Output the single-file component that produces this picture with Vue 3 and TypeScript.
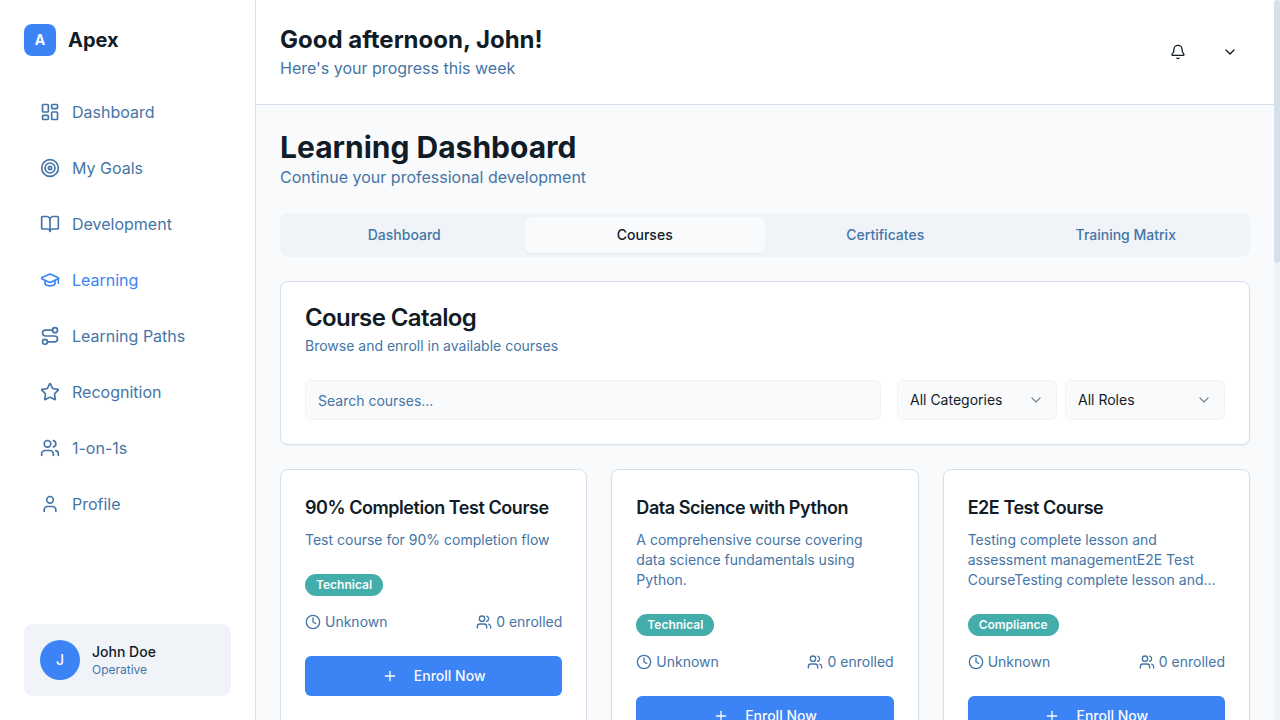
<script setup lang="ts">
interface NavItem {
  label: string
  icon: string
  active?: boolean
}

interface Course {
  title: string
  description: string
  category: string
  enrolled: number
}

const icons: Record<string, string[]> = {
  dashboard: [
    'M4 3h5a1 1 0 0 1 1 1v7a1 1 0 0 1-1 1H4a1 1 0 0 1-1-1V4a1 1 0 0 1 1-1z',
    'M15 3h5a1 1 0 0 1 1 1v3a1 1 0 0 1-1 1h-5a1 1 0 0 1-1-1V4a1 1 0 0 1 1-1z',
    'M15 12h5a1 1 0 0 1 1 1v7a1 1 0 0 1-1 1h-5a1 1 0 0 1-1-1v-7a1 1 0 0 1 1-1z',
    'M4 16h5a1 1 0 0 1 1 1v3a1 1 0 0 1-1 1H4a1 1 0 0 1-1-1v-3a1 1 0 0 1 1-1z',
  ],
  target: [
    'M22 12a10 10 0 1 1-20 0 10 10 0 0 1 20 0z',
    'M18 12a6 6 0 1 1-12 0 6 6 0 0 1 12 0z',
    'M14 12a2 2 0 1 1-4 0 2 2 0 0 1 4 0z',
  ],
  book: [
    'M12 7v14',
    'M3 18a1 1 0 0 1-1-1V4a1 1 0 0 1 1-1h5a4 4 0 0 1 4 4 4 4 0 0 1 4-4h5a1 1 0 0 1 1 1v13a1 1 0 0 1-1 1h-6a3 3 0 0 0-3 3 3 3 0 0 0-3-3z',
  ],
  cap: [
    'M21.42 10.922a1 1 0 0 0-.019-1.838L12.83 5.18a2 2 0 0 0-1.66 0L2.6 9.08a1 1 0 0 0 0 1.832l8.57 3.908a2 2 0 0 0 1.66 0z',
    'M22 10v6',
    'M6 12.5V16a6 3 0 0 0 12 0v-3.5',
  ],
  route: [
    'M9 19a3 3 0 1 1-6 0 3 3 0 0 1 6 0z',
    'M9 19h8.5a3.5 3.5 0 0 0 0-7h-11a3.5 3.5 0 0 1 0-7H15',
    'M21 5a3 3 0 1 1-6 0 3 3 0 0 1 6 0z',
  ],
  star: [
    'M11.525 2.295a.53.53 0 0 1 .95 0l2.31 4.679a2.123 2.123 0 0 0 1.595 1.16l5.166.756a.53.53 0 0 1 .294.904l-3.736 3.638a2.123 2.123 0 0 0-.611 1.878l.882 5.14a.53.53 0 0 1-.771.56l-4.618-2.428a2.122 2.122 0 0 0-1.973 0L6.396 21.01a.53.53 0 0 1-.77-.56l.881-5.139a2.122 2.122 0 0 0-.611-1.879L2.16 9.795a.53.53 0 0 1 .294-.906l5.165-.755a2.122 2.122 0 0 0 1.597-1.16z',
  ],
  users: [
    'M16 21v-2a4 4 0 0 0-4-4H6a4 4 0 0 0-4 4v2',
    'M13 7a4 4 0 1 1-8 0 4 4 0 0 1 8 0z',
    'M22 21v-2a4 4 0 0 0-3-3.87',
    'M16 3.13a4 4 0 0 1 0 7.75',
  ],
  user: ['M19 21v-2a4 4 0 0 0-4-4H9a4 4 0 0 0-4 4v2', 'M16 7a4 4 0 1 1-8 0 4 4 0 0 1 8 0z'],
  bell: [
    'M10.268 21a2 2 0 0 0 3.464 0',
    'M3.262 15.326A1 1 0 0 0 4 17h16a1 1 0 0 0 .74-1.673C19.41 13.956 18 12.499 18 8A6 6 0 0 0 6 8c0 4.499-1.411 5.956-2.738 7.326',
  ],
  chevron: ['M6 9l6 6 6-6'],
  clock: ['M22 12a10 10 0 1 1-20 0 10 10 0 0 1 20 0z', 'M12 6v6l4 2'],
  plus: ['M5 12h14', 'M12 5v14'],
}

const nav: NavItem[] = [
  { label: 'Dashboard', icon: 'dashboard' },
  { label: 'My Goals', icon: 'target' },
  { label: 'Development', icon: 'book' },
  { label: 'Learning', icon: 'cap', active: true },
  { label: 'Learning Paths', icon: 'route' },
  { label: 'Recognition', icon: 'star' },
  { label: '1-on-1s', icon: 'users' },
  { label: 'Profile', icon: 'user' },
]

const tabs: string[] = ['Dashboard', 'Courses', 'Certificates', 'Training Matrix']
const activeTab = 'Courses'
const filters: string[] = ['All Categories', 'All Roles']

const courses: Course[] = [
  {
    title: '90% Completion Test Course',
    description: 'Test course for 90% completion flow',
    category: 'Technical',
    enrolled: 0,
  },
  {
    title: 'Data Science with Python',
    description: 'A comprehensive course covering data science fundamentals using Python.',
    category: 'Technical',
    enrolled: 0,
  },
  {
    title: 'E2E Test Course',
    description:
      'Testing complete lesson and assessment managementE2E Test CourseTesting complete lesson and...',
    category: 'Compliance',
    enrolled: 0,
  },
]
</script>

<template>
  <div class="app">
    <aside class="sidebar">
      <div class="brand">
        <div class="brand-mark">A</div>
        <span class="brand-name">Apex</span>
      </div>
      <nav class="nav">
        <a v-for="item in nav" :key="item.label" class="nav-item" :class="{ active: item.active }">
          <svg class="icon large" viewBox="0 0 24 24">
            <path v-for="d in icons[item.icon]" :key="d" :d="d" />
          </svg>
          <span>{{ item.label }}</span>
        </a>
      </nav>
      <div class="account">
        <div class="avatar">J</div>
        <div>
          <div class="account-name">John Doe</div>
          <div class="account-role">Operative</div>
        </div>
      </div>
    </aside>

    <div class="content">
      <header class="header">
        <div>
          <h2 class="greeting">Good afternoon, John!</h2>
          <p class="subtitle">Here's your progress this week</p>
        </div>
        <div class="header-actions">
          <button class="icon-button" aria-label="Notifications">
            <svg class="icon" viewBox="0 0 24 24">
              <path v-for="d in icons.bell" :key="d" :d="d" />
            </svg>
          </button>
          <button class="icon-button" aria-label="Account menu">
            <svg class="icon" viewBox="0 0 24 24">
              <path v-for="d in icons.chevron" :key="d" :d="d" />
            </svg>
          </button>
        </div>
      </header>

      <main class="page">
        <div>
          <h1 class="page-title">Learning Dashboard</h1>
          <p class="subtitle">Continue your professional development</p>
        </div>

        <div class="tabs">
          <button v-for="tab in tabs" :key="tab" class="tab" :class="{ active: tab === activeTab }">
            {{ tab }}
          </button>
        </div>

        <section class="card">
          <h3 class="catalog-title">Course Catalog</h3>
          <p class="catalog-text">Browse and enroll in available courses</p>
          <div class="filters">
            <input class="field search" type="text" placeholder="Search courses..." />
            <div class="selects">
              <button v-for="filter in filters" :key="filter" class="field select">
                <span>{{ filter }}</span>
                <svg class="icon faded" viewBox="0 0 24 24">
                  <path v-for="d in icons.chevron" :key="d" :d="d" />
                </svg>
              </button>
            </div>
          </div>
        </section>

        <div class="courses">
          <article v-for="course in courses" :key="course.title" class="card">
            <h3 class="course-title">{{ course.title }}</h3>
            <p class="course-text">{{ course.description }}</p>
            <span class="badge">{{ course.category }}</span>
            <div class="meta">
              <span class="meta-item">
                <svg class="icon" viewBox="0 0 24 24">
                  <path v-for="d in icons.clock" :key="d" :d="d" />
                </svg>
                Unknown
              </span>
              <span class="meta-item">
                <svg class="icon" viewBox="0 0 24 24">
                  <path v-for="d in icons.users" :key="d" :d="d" />
                </svg>
                <span><span>{{ course.enrolled }}</span> enrolled</span>
              </span>
            </div>
            <button class="enroll">
              <svg class="icon" viewBox="0 0 24 24">
                <path v-for="d in icons.plus" :key="d" :d="d" />
              </svg>
              Enroll Now
            </button>
          </article>
        </div>
      </main>
    </div>

    <div class="scrollbar"><div class="thumb"></div></div>
  </div>
</template>

<style>
body {
  margin: 0;
  overflow: hidden;
}
</style>

<style scoped>
.app {
  --ink: #111c27;
  --muted: #4575a6;
  --line: #d5e0ec;
  --primary: #3c83f6;
  --soft: #f0f4f9;
  --page: #f9fafc;
  display: flex;
  height: 100vh;
  overflow: hidden;
  background: var(--page);
  color: var(--ink);
  font-family: Inter, "Liberation Sans", sans-serif;
  font-size: 16px;
  line-height: 24px;
}

.app * {
  box-sizing: border-box;
}

h1,
h2,
h3,
p {
  margin: 0;
}

button,
input {
  margin: 0;
  padding: 0;
  border: 0;
  background: none;
  color: inherit;
  font: inherit;
}

.icon {
  flex: none;
  width: 16px;
  height: 16px;
  fill: none;
  stroke: currentColor;
  stroke-width: 2;
  stroke-linecap: round;
  stroke-linejoin: round;
}

.icon.large {
  width: 20px;
  height: 20px;
}

.icon.faded {
  opacity: 0.5;
}

.sidebar {
  display: flex;
  flex: none;
  flex-direction: column;
  width: 256px;
  padding: 24px;
  border-right: 1px solid var(--line);
  background: #fff;
}

.brand {
  display: flex;
  align-items: center;
  gap: 12px;
}

.brand-mark {
  display: flex;
  align-items: center;
  justify-content: center;
  width: 32px;
  height: 32px;
  border-radius: 8px;
  background: var(--primary);
  color: var(--page);
  font-size: 14px;
  font-weight: 700;
}

.brand-name {
  font-size: 20px;
  font-weight: 700;
  line-height: 28px;
}

.nav {
  display: flex;
  flex: 1;
  flex-direction: column;
  gap: 8px;
  margin-top: 32px;
}

.nav-item {
  display: flex;
  align-items: center;
  gap: 12px;
  padding: 12px 16px;
  color: var(--muted);
}

.nav-item.active {
  color: var(--primary);
}

.account {
  display: flex;
  align-items: center;
  gap: 12px;
  padding: 16px;
  border-radius: 8px;
  background: var(--soft);
}

.avatar {
  display: flex;
  align-items: center;
  justify-content: center;
  width: 40px;
  height: 40px;
  border-radius: 50%;
  background: var(--primary);
  color: var(--page);
  font-size: 14px;
  font-weight: 500;
}

.account-name {
  font-size: 14px;
  font-weight: 500;
  line-height: 20px;
}

.account-role {
  color: var(--muted);
  font-size: 12px;
  line-height: 16px;
}

.content {
  flex: 1;
  min-width: 0;
}

.header {
  display: flex;
  align-items: center;
  justify-content: space-between;
  padding: 24px;
  border-bottom: 1px solid var(--line);
  background: #fff;
}

.greeting {
  font-size: 24px;
  font-weight: 700;
  line-height: 32px;
}

.subtitle {
  color: var(--muted);
}

.header-actions {
  display: flex;
  gap: 12px;
}

.icon-button {
  display: flex;
  align-items: center;
  justify-content: center;
  width: 40px;
  height: 40px;
}

.page {
  display: flex;
  flex-direction: column;
  gap: 24px;
  padding: 24px;
}

.page-title {
  font-size: 30px;
  font-weight: 700;
  line-height: 36px;
}

.tabs {
  display: grid;
  grid-template-columns: repeat(4, 1fr);
  padding: 4px;
  border-radius: 8px;
  background: var(--soft);
}

.tab {
  height: 36px;
  border-radius: 6px;
  color: var(--muted);
  font-size: 14px;
  font-weight: 500;
  line-height: 20px;
}

.tab.active {
  background: var(--page);
  box-shadow: 0 1px 2px rgba(0, 0, 0, 0.05);
  color: var(--ink);
}

.card {
  padding: 24px;
  border: 1px solid var(--line);
  border-radius: 8px;
  background: #fff;
  box-shadow: 0 1px 2px rgba(0, 0, 0, 0.05);
}

.catalog-title {
  font-size: 24px;
  font-weight: 600;
  letter-spacing: -0.6px;
  line-height: 24px;
}

.catalog-text {
  margin-top: 6px;
  color: var(--muted);
  font-size: 14px;
  line-height: 20px;
}

.filters {
  display: flex;
  gap: 16px;
  margin-top: 24px;
}

.field {
  height: 40px;
  padding: 0 12px;
  border: 1px solid var(--soft);
  border-radius: 6px;
  background: var(--page);
  font-size: 14px;
}

.search {
  flex: 1;
  min-width: 0;
}

.search::placeholder {
  color: var(--muted);
  opacity: 1;
}

.selects {
  display: flex;
  gap: 8px;
}

.select {
  display: flex;
  align-items: center;
  justify-content: space-between;
  width: 160px;
}

.courses {
  display: grid;
  grid-template-columns: repeat(3, 1fr);
  gap: 24px;
}

.course-title {
  font-size: 18px;
  font-weight: 600;
  letter-spacing: -0.45px;
  line-height: 28px;
}

.course-text {
  margin-top: 8px;
  color: var(--muted);
  font-size: 14px;
  line-height: 20px;
}

.badge {
  display: block;
  width: fit-content;
  margin-top: 24px;
  padding: 3px 11px;
  border-radius: 11px;
  background: #43adac;
  color: var(--page);
  font-size: 12px;
  font-weight: 600;
  line-height: 16px;
}

.meta {
  display: flex;
  justify-content: space-between;
  margin-top: 16px;
  color: var(--muted);
  font-size: 14px;
  line-height: 20px;
}

.meta-item {
  display: flex;
  align-items: center;
  gap: 4px;
}

.enroll {
  display: flex;
  align-items: center;
  justify-content: center;
  gap: 16px;
  width: 100%;
  height: 40px;
  margin-top: 24px;
  border-radius: 6px;
  background: var(--primary);
  color: var(--page);
  font-size: 14px;
  font-weight: 500;
}

.scrollbar {
  flex: none;
  width: 6px;
  background: var(--soft);
}

.thumb {
  height: 263px;
  border-radius: 3px;
  background: var(--line);
}
</style>
